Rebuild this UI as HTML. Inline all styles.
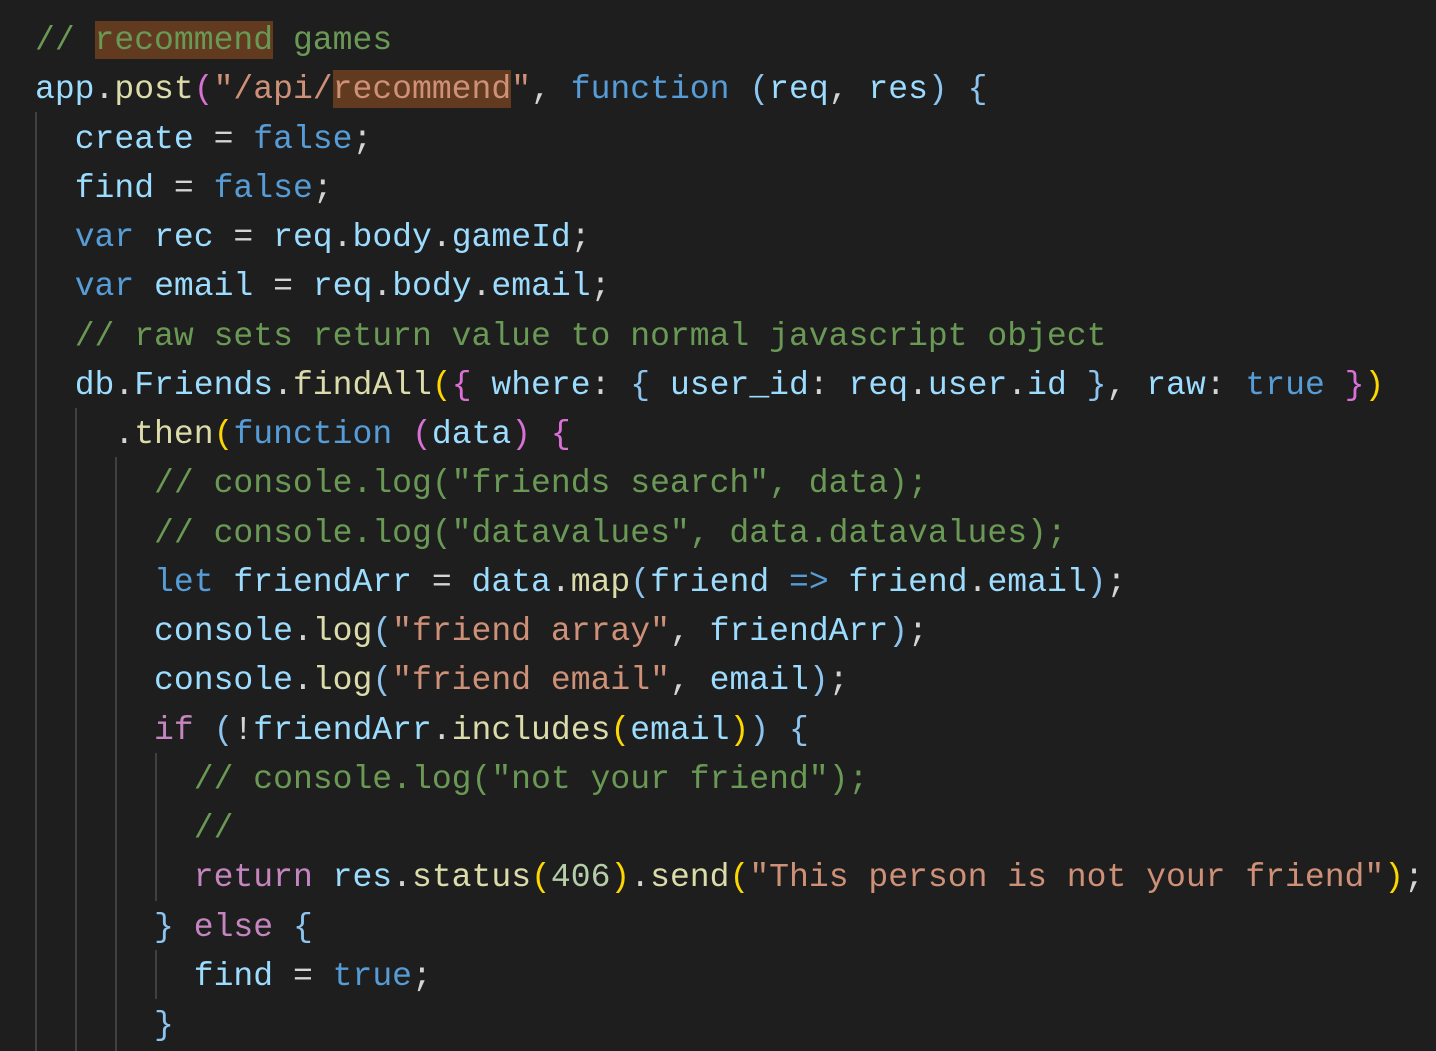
<!DOCTYPE html>
<html><head><meta charset="utf-8"><style>
html,body{margin:0;padding:0;background:#1e1e1e;width:1436px;height:1051px;overflow:hidden}
.code{position:absolute;left:35px;top:16px;font-family:"Liberation Mono",monospace;font-size:33.07px;line-height:49.25px;color:#d4d4d4;white-space:normal}
.l{height:49.25px;white-space:pre}
.v{color:#9cdcfe}.f{color:#dcdcaa}.k{color:#569cd6}.c{color:#6a9955}.s{color:#ce9178}.p{color:#c586c0}.n{color:#b5cea8}
.b1{color:#ffd700}.b2{color:#da70d6}.b3{color:#8cc4ef}
.hl{background:#613a20}
.g{position:absolute;width:2px;background:#404040}
</style></head><body>
<div class="g" style="left:35px;top:112px;height:939px"></div>
<div class="g" style="left:75px;top:408px;height:643px"></div>
<div class="g" style="left:115px;top:457px;height:594px"></div>
<div class="g" style="left:155px;top:753px;height:148px"></div>
<div class="g" style="left:155px;top:950px;height:49px"></div>
<div class="code">
<div class="l"><span class="c">// <span class="hl">recommend</span> games</span></div>
<div class="l"><span class="v">app</span>.<span class="f">post</span><span class="b2">(</span><span class="s">"/api/<span class="hl">recommend</span>"</span>, <span class="k">function</span> <span class="b3">(</span><span class="v">req</span>, <span class="v">res</span><span class="b3">)</span> <span class="b3">{</span></div>
<div class="l">  <span class="v">create</span> = <span class="k">false</span>;</div>
<div class="l">  <span class="v">find</span> = <span class="k">false</span>;</div>
<div class="l">  <span class="k">var</span> <span class="v">rec</span> = <span class="v">req</span>.<span class="v">body</span>.<span class="v">gameId</span>;</div>
<div class="l">  <span class="k">var</span> <span class="v">email</span> = <span class="v">req</span>.<span class="v">body</span>.<span class="v">email</span>;</div>
<div class="l">  <span class="c">// raw sets return value to normal javascript object</span></div>
<div class="l">  <span class="v">db</span>.<span class="v">Friends</span>.<span class="f">findAll</span><span class="b1">(</span><span class="b2">{</span> <span class="v">where</span>: <span class="b3">{</span> <span class="v">user_id</span>: <span class="v">req</span>.<span class="v">user</span>.<span class="v">id</span> <span class="b3">}</span>, <span class="v">raw</span>: <span class="k">true</span> <span class="b2">}</span><span class="b1">)</span></div>
<div class="l">    .<span class="f">then</span><span class="b1">(</span><span class="k">function</span> <span class="b2">(</span><span class="v">data</span><span class="b2">)</span> <span class="b2">{</span></div>
<div class="l">      <span class="c">// console.log("friends search", data);</span></div>
<div class="l">      <span class="c">// console.log("datavalues", data.datavalues);</span></div>
<div class="l">      <span class="k">let</span> <span class="v">friendArr</span> = <span class="v">data</span>.<span class="f">map</span><span class="b3">(</span><span class="v">friend</span> <span class="k">=&gt;</span> <span class="v">friend</span>.<span class="v">email</span><span class="b3">)</span>;</div>
<div class="l">      <span class="v">console</span>.<span class="f">log</span><span class="b3">(</span><span class="s">"friend array"</span>, <span class="v">friendArr</span><span class="b3">)</span>;</div>
<div class="l">      <span class="v">console</span>.<span class="f">log</span><span class="b3">(</span><span class="s">"friend email"</span>, <span class="v">email</span><span class="b3">)</span>;</div>
<div class="l">      <span class="p">if</span> <span class="b3">(</span>!<span class="v">friendArr</span>.<span class="f">includes</span><span class="b1">(</span><span class="v">email</span><span class="b1">)</span><span class="b3">)</span> <span class="b3">{</span></div>
<div class="l">        <span class="c">// console.log("not your friend");</span></div>
<div class="l">        <span class="c">//</span></div>
<div class="l">        <span class="p">return</span> <span class="v">res</span>.<span class="f">status</span><span class="b1">(</span><span class="n">406</span><span class="b1">)</span>.<span class="f">send</span><span class="b1">(</span><span class="s">"This person is not your friend"</span><span class="b1">)</span>;</div>
<div class="l">      <span class="b3">}</span> <span class="p">else</span> <span class="b3">{</span></div>
<div class="l">        <span class="v">find</span> = <span class="k">true</span>;</div>
<div class="l">      <span class="b3">}</span></div>
</div>
</body></html>
